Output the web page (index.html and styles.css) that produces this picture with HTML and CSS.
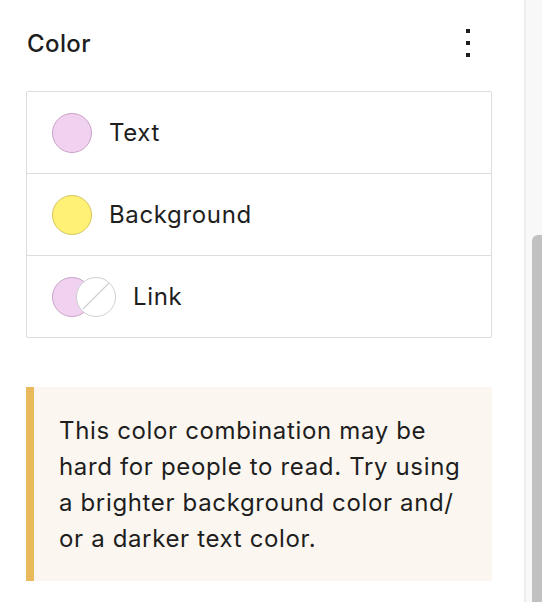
FILE: index.html
```html
<!DOCTYPE html>
<html lang="en">
<head>
    <meta charset="UTF-8">
    <meta name="viewport" content="width=device-width, initial-scale=1.0">
    <title>Color settings</title>
    <link rel="stylesheet" href="styles.css">
</head>
<body>
    <div class="panel">
        <!-- 标题栏 -->
        <div class="panel-head">
          <h2>Color</h2>
          <div class="more"><span></span><span></span><span></span></div>
        </div>
        <!-- 颜色项 -->
        <ul class="colors">
          <li>
            <span class="swatch text-swatch"></span>
            <span class="label">Text</span>
          </li>
          <li>
            <span class="swatch bg-swatch"></span>
            <span class="label">Background</span>
          </li>
          <li>
            <span class="swatches">
              <span class="swatch text-swatch"></span>
              <span class="swatch empty-swatch">
                <svg width="40" height="40" viewBox="0 0 40 40"><line x1="33" y1="7" x2="7" y2="33" stroke="#d0d0d0" stroke-width="1.3"/></svg>
              </span>
            </span>
            <span class="label">Link</span>
          </li>
        </ul>
        <!-- 对比度提示 -->
        <div class="notice">
          This color combination may be hard for people to read. Try using a brighter background color and/<wbr>or a darker text color.
        </div>
    </div>
    <div class="scrollbar">
        <div class="thumb"></div>
    </div>
</body>
</html>
```

FILE: styles.css
```css
* {
  margin: 0;
  padding: 0;
  box-sizing: border-box;
}
ul {
  list-style: none;
}
body {
  display: flex;
  height: 602px;
  overflow: hidden;
  background: #fff;
  color: #1e1e1e;
  font-family: Inter, "Liberation Sans", sans-serif;
}
.panel {
  width: 524px;
  padding: 0 32px 0 26px;
}
.panel-head {
  height: 86px;
  display: flex;
  align-items: center;
  justify-content: space-between;
  padding-left: 1px;
}
.panel-head h2 {
  font-size: 24px;
  font-weight: 500;
  letter-spacing: 0.4px;
}
.more {
  display: flex;
  flex-direction: column;
  gap: 8px;
  margin-right: 22px;
}
.more span {
  width: 4px;
  height: 4px;
  background: #1e1e1e;
}
.colors {
  margin-top: 5px;
  border: 1px solid #dddddd;
  border-radius: 2px;
}
.colors li {
  height: 82px;
  display: flex;
  align-items: center;
  padding-left: 25px;
  gap: 17px;
  border-top: 1px solid #dddddd;
}
.colors li:first-child {
  height: 81px;
  border-top: none;
}
.colors .label {
  font-size: 24px;
  letter-spacing: 0.65px;
}
.swatch {
  display: block;
  width: 40px;
  height: 40px;
  border-radius: 50%;
  border: 1px solid;
  flex-shrink: 0;
}
.text-swatch {
  background: #f0d1f0;
  border-color: #c9a3c9;
}
.bg-swatch {
  background: #fff176;
  border-color: #d3c65a;
}
.swatches {
  display: flex;
}
.swatches .swatch + .swatch {
  margin-left: -16px;
}
.empty-swatch {
  background: #fff;
  border: 1.5px solid #d0d0d0;
  overflow: hidden;
  position: relative;
}
.empty-swatch svg {
  position: absolute;
  left: -1.5px;
  top: -1.5px;
}
.notice {
  margin-top: 49px;
  height: 194px;
  background: #fbf7f0;
  border-left: 8px solid #e9b95c;
  padding: 26px 20px 0 25px;
  font-size: 24px;
  line-height: 36px;
  letter-spacing: 0.65px;
}
.scrollbar {
  flex: 1;
  background: #f8f8f8;
  border-left: 2px solid #ececec;
  padding: 235px 0 0 6px;
}
.thumb {
  height: 100%;
  background: #c1c1c1;
  border-radius: 6px 0 0 0;
}
```
